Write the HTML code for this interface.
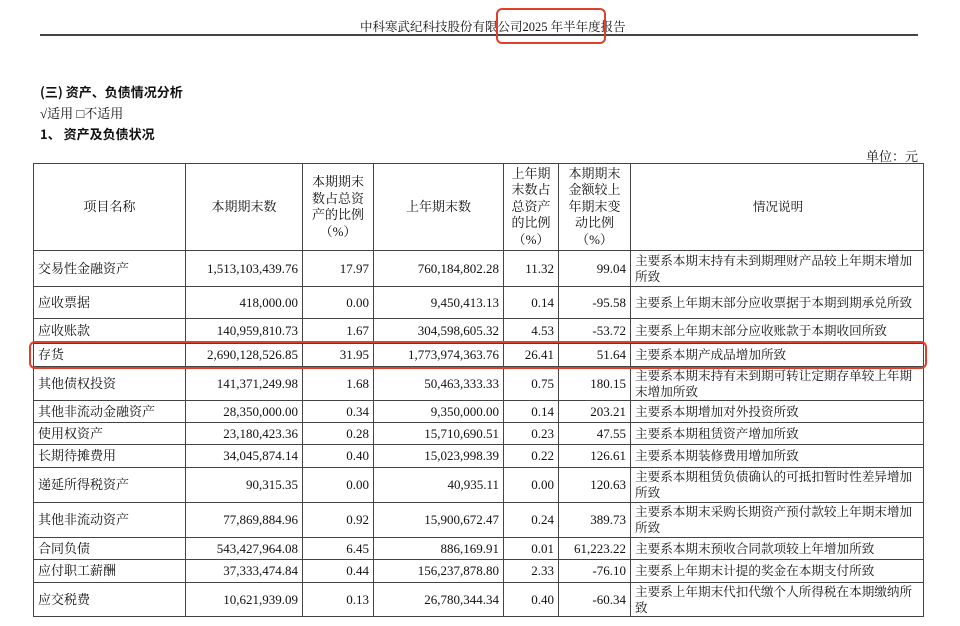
<!DOCTYPE html>
<html><head><meta charset="utf-8"><style>
body{margin:0;width:960px;height:626px;background:#fff;position:relative;overflow:hidden;font-family:"Liberation Serif","Noto Serif CJK SC",serif;color:#111;font-size:13px}
.a{position:absolute;white-space:nowrap}
table{position:absolute;left:33px;top:163px;border-collapse:collapse;table-layout:fixed;width:890px}
td{border:1px solid #444;padding:0 4px;font-size:13px;line-height:16px;vertical-align:middle;overflow:hidden}
td.n{text-align:right}
td:last-child{font-size:12.6px;padding:0 2px 0 4px}
thead td{text-align:center;line-height:16.5px}
.h{font-weight:bold;font-family:"Noto Sans CJK SC","Liberation Sans",sans-serif;font-size:13px}
</style></head><body>
<div class="a" style="left:360px;top:17px;font-size:12.5px">中科寒武纪科技股份有限公司2025 年半年度报告</div>
<div class="a" style="left:40px;top:34px;width:878px;height:2px;background:#444"></div>
<div class="a" style="left:496px;top:8px;width:106px;height:32px;border:2.5px solid #e0402a;border-radius:6px"></div>
<div class="a h" style="left:40px;top:82px">(三) 资产、负债情况分析</div>
<div class="a" style="left:40px;top:103px">√适用 □不适用</div>
<div class="a h" style="left:40px;top:124px">1、 资产及负债状况</div>
<div class="a" style="left:866px;top:146px">单位：元</div>
<table>
<colgroup><col style="width:152px"><col style="width:117px"><col style="width:71px"><col style="width:130px"><col style="width:55px"><col style="width:72px"><col style="width:293px"></colgroup>
<thead><tr style="height:87px"><td>项目名称</td><td>本期期末数</td><td>本期期末数占总资产的比例（%）</td><td>上年期末数</td><td>上年期末数占总资产的比例（%）</td><td>本期期末金额较上年期末变动比例（%）</td><td>情况说明</td></tr></thead>
<tbody>
<tr style="height:36px"><td>交易性金融资产</td><td class="n">1,513,103,439.76</td><td class="n">17.97</td><td class="n">760,184,802.28</td><td class="n">11.32</td><td class="n">99.04</td><td>主要系本期末持有未到期理财产品较上年期末增加所致</td></tr>
<tr style="height:32px"><td>应收票据</td><td class="n">418,000.00</td><td class="n">0.00</td><td class="n">9,450,413.13</td><td class="n">0.14</td><td class="n">-95.58</td><td>主要系上年期末部分应收票据于本期到期承兑所致</td></tr>
<tr style="height:25px"><td>应收账款</td><td class="n">140,959,810.73</td><td class="n">1.67</td><td class="n">304,598,605.32</td><td class="n">4.53</td><td class="n">-53.72</td><td>主要系上年期末部分应收账款于本期收回所致</td></tr>
<tr style="height:23px"><td>存货</td><td class="n">2,690,128,526.85</td><td class="n">31.95</td><td class="n">1,773,974,363.76</td><td class="n">26.41</td><td class="n">51.64</td><td>主要系本期产成品增加所致</td></tr>
<tr style="height:34px"><td>其他债权投资</td><td class="n">141,371,249.98</td><td class="n">1.68</td><td class="n">50,463,333.33</td><td class="n">0.75</td><td class="n">180.15</td><td>主要系本期末持有未到期可转让定期存单较上年期末增加所致</td></tr>
<tr style="height:22px"><td>其他非流动金融资产</td><td class="n">28,350,000.00</td><td class="n">0.34</td><td class="n">9,350,000.00</td><td class="n">0.14</td><td class="n">203.21</td><td>主要系本期增加对外投资所致</td></tr>
<tr style="height:22px"><td>使用权资产</td><td class="n">23,180,423.36</td><td class="n">0.28</td><td class="n">15,710,690.51</td><td class="n">0.23</td><td class="n">47.55</td><td>主要系本期租赁资产增加所致</td></tr>
<tr style="height:23px"><td>长期待摊费用</td><td class="n">34,045,874.14</td><td class="n">0.40</td><td class="n">15,023,998.39</td><td class="n">0.22</td><td class="n">126.61</td><td>主要系本期装修费用增加所致</td></tr>
<tr style="height:35px"><td>递延所得税资产</td><td class="n">90,315.35</td><td class="n">0.00</td><td class="n">40,935.11</td><td class="n">0.00</td><td class="n">120.63</td><td>主要系本期租赁负债确认的可抵扣暂时性差异增加所致</td></tr>
<tr style="height:35px"><td>其他非流动资产</td><td class="n">77,869,884.96</td><td class="n">0.92</td><td class="n">15,900,672.47</td><td class="n">0.24</td><td class="n">389.73</td><td>主要系本期末采购长期资产预付款较上年期末增加所致</td></tr>
<tr style="height:22px"><td>合同负债</td><td class="n">543,427,964.08</td><td class="n">6.45</td><td class="n">886,169.91</td><td class="n">0.01</td><td class="n">61,223.22</td><td>主要系本期末预收合同款项较上年增加所致</td></tr>
<tr style="height:23px"><td>应付职工薪酬</td><td class="n">37,333,474.84</td><td class="n">0.44</td><td class="n">156,237,878.80</td><td class="n">2.33</td><td class="n">-76.10</td><td>主要系上年期末计提的奖金在本期支付所致</td></tr>
<tr style="height:34px"><td>应交税费</td><td class="n">10,621,939.09</td><td class="n">0.13</td><td class="n">26,780,344.34</td><td class="n">0.40</td><td class="n">-60.34</td><td>主要系上年期末代扣代缴个人所得税在本期缴纳所致</td></tr>
</tbody></table>
<div class="a" style="left:29px;top:341px;width:894px;height:24px;border:2.5px solid #e0402a;border-radius:6px"></div>
</body></html>
